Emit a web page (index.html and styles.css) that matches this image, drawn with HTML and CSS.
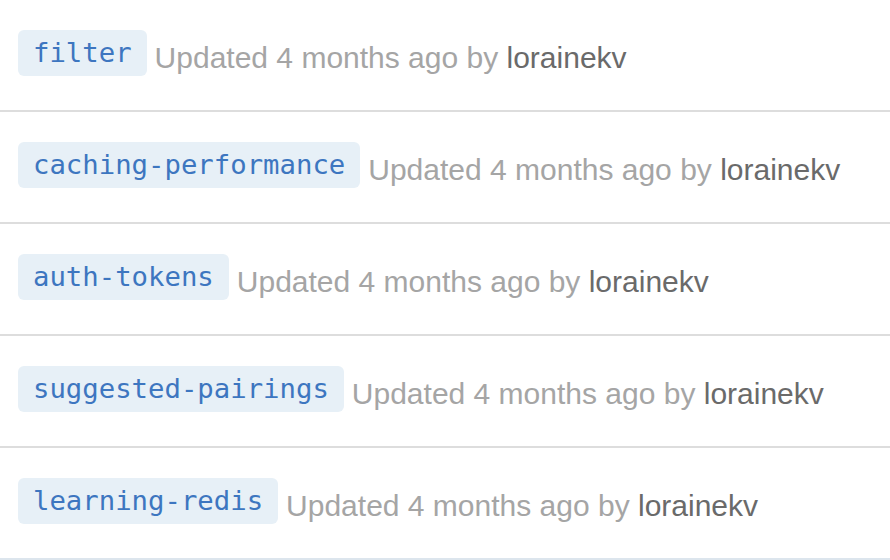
FILE: index.html
```html
<!DOCTYPE html>
<html lang="en">
<head>
    <meta charset="UTF-8">
    <meta name="viewport" content="width=device-width, initial-scale=1.0">
    <title>Branches</title>
    <link rel="stylesheet" href="styles.css">
</head>
<body>
    <ul class="branch-list">
        <li class="branch">
            <a class="branch-name" href="#">filter</a>
            <span class="branch-meta">Updated 4 months ago by <a class="author" href="#">lorainekv</a></span>
        </li>
        <li class="branch">
            <a class="branch-name" href="#">caching-performance</a>
            <span class="branch-meta">Updated 4 months ago by <a class="author" href="#">lorainekv</a></span>
        </li>
        <li class="branch">
            <a class="branch-name" href="#">auth-tokens</a>
            <span class="branch-meta">Updated 4 months ago by <a class="author" href="#">lorainekv</a></span>
        </li>
        <li class="branch">
            <a class="branch-name" href="#">suggested-pairings</a>
            <span class="branch-meta">Updated 4 months ago by <a class="author" href="#">lorainekv</a></span>
        </li>
        <li class="branch">
            <a class="branch-name" href="#">learning-redis</a>
            <span class="branch-meta">Updated 4 months ago by <a class="author" href="#">lorainekv</a></span>
        </li>
    </ul>
</body>
</html>
```

FILE: styles.css
```css
body {
    margin: 0;
    padding: 0;
    background: #fff;
    font-family: 'Liberation Sans', Arial, sans-serif;
    overflow: hidden;
}

.branch-list {
    list-style: none;
    margin: 0;
    padding: 0;
}

.branch {
    display: flex;
    align-items: center;
    height: 110px;
    padding: 0 18px;
    border-bottom: 2px solid #dddddd;
}

.branch:last-child {
    border-bottom-color: #dce5ed;
}

.branch-name {
    display: inline-block;
    height: 46px;
    line-height: 46px;
    padding: 0 15px;
    margin-top: -4px;
    border-radius: 6px;
    background: #e7f0f7;
    color: #3d76c0;
    font-family: 'DejaVu Sans Mono', 'Liberation Mono', monospace;
    font-size: 27.3px;
    text-decoration: none;
}

.branch-meta {
    margin-left: 8px;
    margin-top: 5px;
    color: #a5a5a5;
    font-size: 30px;
}

.author {
    color: #6a6a6a;
    text-decoration: none;
}
```
